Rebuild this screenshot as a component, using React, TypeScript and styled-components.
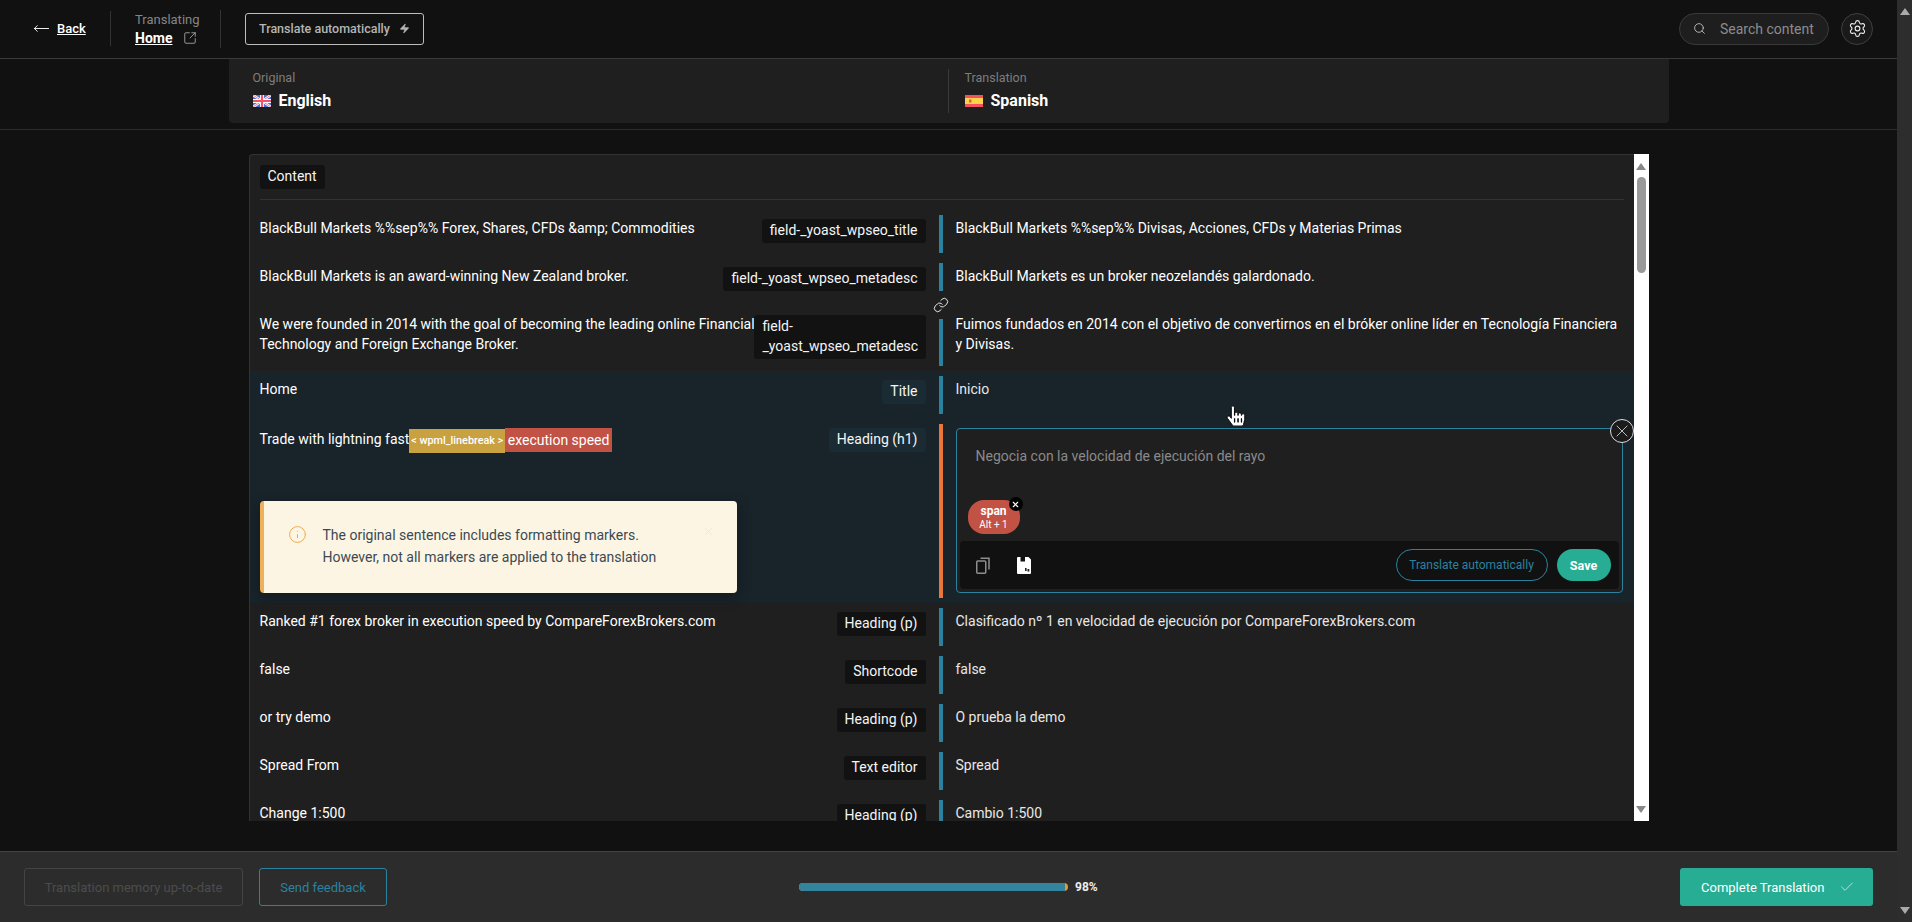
import React from "react";
import styled, { createGlobalStyle } from "styled-components";
import { Check, Link, MoveLeft, Search, Settings, SquareArrowOutUpRight, X, Zap, Info } from "lucide-react";
import { FaHandPointer } from "react-icons/fa";

const teal = "#2b829e";
const green = "#26ad94";

const Global = createGlobalStyle`
  html, body { margin: 0; padding: 0; height: 100%; background: #111; overflow: hidden; }
  body { font-family: Roboto, "Liberation Sans", sans-serif; font-size: 14px; color: #fff; }
  * { box-sizing: border-box; }
`;

const Shell = styled.div`
  display: flex;
  width: 1912px;
  height: 922px;
  position: relative;
`;

const Main = styled.div`
  flex: 1;
  min-width: 0;
  display: flex;
  flex-direction: column;
`;

const Arrow = styled.span<{ $down?: boolean; $color: string }>`
  display: block;
  width: 0;
  height: 0;
  border-left: 5px solid transparent;
  border-right: 5px solid transparent;
  ${(p) => (p.$down ? `border-top: 7px solid ${p.$color};` : `border-bottom: 7px solid ${p.$color};`)}
`;

const PageScroll = styled.div`
  width: 15px;
  background: #2d2d2d;
  display: flex;
  flex-direction: column;
  justify-content: space-between;
  align-items: center;
  padding: 8px 0;
`;

const Header = styled.header`
  height: 59px;
  flex: none;
  display: flex;
  align-items: center;
  padding: 0 24px 1px 33px;
  border-bottom: 1px solid #3a3a3a;
  background: #111;
`;

const BackLink = styled.a`
  display: flex;
  align-items: center;
  gap: 7px;
  width: 77px;
  color: #fff;
  font-size: 13px;
  font-weight: 500;
  svg { flex: none; }
  span { text-decoration: underline; }
`;

const VLine = styled.div<{ $h: number }>`
  width: 1px;
  height: ${(p) => p.$h}px;
  background: #333;
  flex: none;
`;

const Translating = styled.div`
  width: 85px;
  margin-left: 24px;
  small {
    display: block;
    font-size: 13px;
    line-height: 16px;
    color: #858585;
  }
`;

const HomeLink = styled.div`
  display: flex;
  align-items: center;
  gap: 11px;
  margin-top: 2px;
  font-size: 14px;
  line-height: 16px;
  font-weight: 700;
  color: #fff;
  span { text-decoration: underline; }
  svg { color: #bbb; }
`;

const AutoButton = styled.button`
  margin-left: 24px;
  width: 179px;
  height: 32px;
  display: flex;
  align-items: center;
  justify-content: space-between;
  padding: 0 13px;
  background: transparent;
  border: 1px solid #bdbdbd;
  border-radius: 3px;
  color: #b5b5b5;
  font: 500 12.5px Roboto, sans-serif;
`;

const Spacer = styled.div`
  flex: 1;
`;

const SearchBox = styled.div`
  width: 150px;
  height: 32px;
  display: flex;
  align-items: center;
  gap: 14px;
  padding-left: 13px;
  border: 1px solid #3a3a3a;
  border-radius: 16px;
  background: #1e1e1e;
  color: #8c8c8c;
  font-size: 14px;
  svg { color: #ccc; flex: none; }
`;

const GearButton = styled.div`
  width: 32px;
  height: 32px;
  margin-left: 12px;
  display: flex;
  align-items: center;
  justify-content: center;
  border: 1px solid #3f3f3f;
  border-radius: 50%;
  background: #1a1a1a;
  color: #eee;
`;

const SubHeader = styled.div`
  height: 71px;
  flex: none;
  display: flex;
  justify-content: center;
  border-bottom: 1px solid #2c2c2c;
  background: #111;
`;

const LangPanel = styled.div`
  width: 1440px;
  height: 64px;
  display: flex;
  background: #1f1f1f;
  border-radius: 0 0 4px 4px;
  padding: 11px 0 0 24px;
`;

const LangCol = styled.div<{ $w?: number }>`
  ${(p) => (p.$w ? `width: ${p.$w}px;` : "")}
  small {
    display: block;
    font-size: 12.5px;
    line-height: 16px;
    color: #7d7d7d;
  }
`;

const LangDivider = styled.div`
  width: 1px;
  height: 44px;
  margin-top: -1px;
  background: #3a3a3a;
  margin-right: 16px;
`;

const LangName = styled.div`
  display: flex;
  align-items: center;
  gap: 8px;
  margin-top: 5px;
  font-size: 16px;
  line-height: 20px;
  font-weight: 700;
  color: #fff;
`;

const Content = styled.div`
  flex: 1;
  min-height: 0;
  display: flex;
  justify-content: center;
  padding: 24px 0 30px;
  background: #111;
`;

const Table = styled.div`
  width: 1385px;
  display: flex;
  flex-direction: column;
  background: #1f1f1f;
  border: 1px solid #333;
  border-right: none;
  border-bottom: none;
  border-radius: 4px 0 0 0;
  overflow: hidden;
`;

const TableHead = styled.div`
  margin: 10px 10px 0;
  padding-bottom: 10px;
  border-bottom: 1px solid #333;
  flex: none;
`;

const Rows = styled.div`
  flex: 1;
  min-height: 0;
  overflow: hidden;
  padding-top: 10px;
`;

const Row = styled.div<{ $lit?: boolean }>`
  display: grid;
  grid-template-columns: 666px 1fr;
  column-gap: 13px;
  padding: 5px 0 5px 10px;
  position: relative;
  background: ${(p) => (p.$lit ? "#18232a" : "transparent")};
`;

const LeftCell = styled.div`
  display: flex;
  flex-direction: column;
  min-width: 0;
`;

const LeftLine = styled.div`
  display: flex;
  justify-content: space-between;
  align-items: flex-start;
`;

const SourceText = styled.div<{ $active?: boolean }>`
  padding-top: ${(p) => (p.$active ? 5 : 3)}px;
  line-height: 20px;
  min-width: 0;
  display: flex;
  flex-wrap: wrap;
`;

const Tag = styled.div<{ $lit?: boolean; $w?: number }>`
  flex: none;
  margin-top: 4px;
  padding: 1px 8px 3px;
  line-height: 20px;
  border-radius: 3px;
  color: #f5f5f5;
  background: ${(p) => (p.$lit ? "#1b2b34" : "#121212")};
  ${(p) => (p.$w ? `width: ${p.$w}px; margin-left: -3px; padding-left: 9px; padding-right: 7px;` : "")}
`;

const HeadTag = styled(Tag)`
  display: inline-block;
  margin-top: 0;
`;

const RightCell = styled.div<{ $active?: boolean; $soft?: boolean }>`
  min-height: 38px;
  border-left: 4px solid ${(p) => (p.$active ? "#e9773a" : teal)};
  padding: ${(p) => (p.$active ? "4px 11px 5px 13px" : "3px 11px 12px 13px")};
  line-height: 20px;
  color: ${(p) => (p.$soft ? "#e8e8e8" : "#fff")};
`;

const LinkBadge = styled.div`
  position: absolute;
  left: 679px;
  top: -15px;
  width: 24px;
  height: 28px;
  display: flex;
  align-items: center;
  justify-content: center;
  background: #1f1f1f;
  color: #e6e6e6;
`;

const LineBreakChip = styled.span`
  height: 24px;
  padding: 0 2px;
  display: inline-flex;
  align-items: center;
  background: #c9a141;
  color: #fff;
  font-size: 10.8px;
  font-weight: 500;
`;

const SpanChip = styled.span`
  height: 24px;
  margin-top: -1px;
  padding: 0 2.5px;
  display: inline-flex;
  align-items: center;
  background: #c25243;
  color: #fff;
`;

const Alert = styled.div`
  width: 477px;
  height: 92px;
  margin-top: 48px;
  display: flex;
  align-items: flex-start;
  padding: 23px 22px 0 24px;
  background: #fdf5e4;
  border-left: 4px solid #eeb058;
  border-radius: 4px;
  box-shadow: 0 4px 14px rgba(0, 0, 0, 0.3);
  color: #3b4a52;
  line-height: 22px;
`;

const AlertIcon = styled.div`
  color: #e9a94d;
  flex: none;
  width: 35px;
  margin-top: 1px;
  display: flex;
`;

const AlertText = styled.div`
  flex: 1;
`;

const AlertClose = styled.div`
  color: #f3dfc0;
  display: flex;
  margin-top: 1px;
`;

const Editor = styled.div`
  position: relative;
  height: 165px;
  border: 1px solid ${teal};
  border-radius: 4px;
  background: #1f1f1f;
  display: flex;
  flex-direction: column;
  padding: 0 3px 2px;
`;

const Placeholder = styled.div`
  padding: 17px 0 0 16px;
  color: #8a8a8a;
  line-height: 20px;
  height: 71px;
`;

const MarkerChip = styled.div`
  position: relative;
  width: 52px;
  height: 34px;
  margin-left: 8px;
  display: flex;
  flex-direction: column;
  align-items: center;
  justify-content: center;
  background: #c25243;
  border-radius: 16px;
  color: #fff;
  b { font-size: 12px; line-height: 14px; font-weight: 700; }
  small { font-size: 10px; line-height: 13px; }
`;

const MarkerRemove = styled.div`
  position: absolute;
  right: -3px;
  top: -3px;
  width: 14px;
  height: 14px;
  display: flex;
  align-items: center;
  justify-content: center;
  background: #000;
  border-radius: 50%;
  color: #fff;
`;

const EditorBar = styled.div`
  height: 48px;
  margin-top: 7px;
  display: flex;
  align-items: center;
  padding: 0 8px 0 16px;
  background: #111;
  border-radius: 4px;
`;

const CopyIcon = styled.div`
  display: flex;
  width: 41px;
`;

const PillOutline = styled.button`
  width: 152px;
  height: 32px;
  border: 1px solid ${teal};
  border-radius: 16px;
  background: transparent;
  color: ${teal};
  font: 400 12px Roboto, sans-serif;
  padding: 0;
`;

const PillSave = styled.button`
  width: 54px;
  height: 32px;
  margin-left: 9px;
  border: none;
  border-radius: 16px;
  background: ${green};
  color: #fff;
  font: 700 12.5px Roboto, sans-serif;
  padding: 0;
`;

const CloseRound = styled.div`
  position: absolute;
  right: -12px;
  top: -10px;
  width: 24px;
  height: 24px;
  display: flex;
  align-items: center;
  justify-content: center;
  border: 1px solid #ddd;
  border-radius: 50%;
  background: #1b1b1b;
  color: #ddd;
`;

const TableScroll = styled.div`
  width: 15px;
  background: #fff;
  display: flex;
  flex-direction: column;
  align-items: center;
  padding: 9px 0 8px;
`;

const Thumb = styled.div`
  width: 9px;
  height: 96px;
  margin-top: 7px;
  border-radius: 5px;
  background: #999;
`;

const Footer = styled.footer`
  height: 71px;
  flex: none;
  position: relative;
  display: flex;
  align-items: center;
  padding: 0 24px 0 24px;
  background: #2c2c2c;
  border-top: 1px solid #444;
`;

const GhostButton = styled.button<{ $w: number; $on?: boolean }>`
  width: ${(p) => p.$w}px;
  height: 38px;
  margin-right: 16px;
  background: transparent;
  border: 1px solid ${(p) => (p.$on ? teal : "#444")};
  border-radius: 3px;
  color: ${(p) => (p.$on ? teal : "#4c4c4c")};
  font: 400 13px Roboto, sans-serif;
  padding: 0;
`;

const Progress = styled.div`
  position: absolute;
  left: 799px;
  top: 0;
  height: 70px;
  display: flex;
  align-items: center;
  gap: 7px;
  font-size: 12px;
  font-weight: 700;
  color: #eee;
`;

const Track = styled.div`
  width: 269px;
  height: 8px;
  border-radius: 4px;
  background: #e8982b;
  overflow: hidden;
`;

const Fill = styled.div`
  height: 100%;
  background: #33859e;
`;

const CompleteButton = styled.button`
  width: 193px;
  height: 38px;
  display: flex;
  align-items: center;
  justify-content: space-between;
  padding: 0 18px 0 21px;
  border: none;
  border-radius: 3px;
  background: ${green};
  color: #fff;
  font: 400 13px Roboto, sans-serif;
  svg { color: #e4f7f3; }
`;

const Cursor = styled.div`
  position: absolute;
  left: 1226px;
  top: 406px;
  display: flex;
  color: #fff;
`;

const UkFlag = () => (
  <svg width="18" height="12" viewBox="0 0 18 12">
    <rect width="18" height="12" fill="#4a6fd8" />
    <path d="M0 0L18 12M18 0L0 12" stroke="#fff" strokeWidth="2.4" />
    <path d="M0 0L18 12M18 0L0 12" stroke="#f0556a" strokeWidth="0.8" />
    <path d="M9 0V12M0 6H18" stroke="#fff" strokeWidth="4" />
    <path d="M9 0V12M0 6H18" stroke="#f0556a" strokeWidth="2.2" />
  </svg>
);

const EsFlag = () => (
  <svg width="18" height="12" viewBox="0 0 18 12">
    <rect width="18" height="12" fill="#f4515d" />
    <rect y="3" width="18" height="6" fill="#fbd34a" />
    <rect x="4" y="4.5" width="2.5" height="3" fill="#d9663a" />
  </svg>
);

const MemoryIcon = () => (
  <svg width="14" height="17" viewBox="0 0 14 17">
    <path d="M1 0H3.5V4.5H8V0H11.5L14 2.5V16a1 1 0 0 1-1 1H1a1 1 0 0 1-1-1V1a1 1 0 0 1 1-1Z" fill="#fff" />
    <rect x="8" y="11" width="1.6" height="3" fill="#222" />
    <rect x="10.5" y="12" width="1.8" height="2.6" fill="#222" />
  </svg>
);

const CopyGlyph = () => (
  <svg width="14" height="17" viewBox="0 0 14 17" fill="none" stroke="#8e8e8e" strokeWidth="1.5">
    <rect x="0.75" y="4" width="9" height="12.25" rx="1" />
    <path d="M4.5 1.2H13V12.5" />
  </svg>
);

type RowData = { source: string; tag: string; target: string; lit?: boolean; tagWidth?: number; linked?: boolean; soft?: boolean };

const before: RowData[] = [
  {
    source: "BlackBull Markets %%sep%% Forex, Shares, CFDs &amp; Commodities",
    tag: "field-_yoast_wpseo_title",
    target: "BlackBull Markets %%sep%% Divisas, Acciones, CFDs y Materias Primas",
  },
  {
    source: "BlackBull Markets is an award-winning New Zealand broker.",
    tag: "field-_yoast_wpseo_metadesc",
    target: "BlackBull Markets es un broker neozelandés galardonado.",
  },
  {
    source: "We were founded in 2014 with the goal of becoming the leading online Financial Technology and Foreign Exchange Broker.",
    tag: "field-_yoast_wpseo_metadesc",
    target: "Fuimos fundados en 2014 con el objetivo de convertirnos en el bróker online líder en Tecnología Financiera y Divisas.",
    tagWidth: 172,
    linked: true,
  },
  { source: "Home", tag: "Title", target: "Inicio", lit: true, soft: true },
];

const after: RowData[] = [
  {
    source: "Ranked #1 forex broker in execution speed by CompareForexBrokers.com",
    tag: "Heading (p)",
    target: "Clasificado nº 1 en velocidad de ejecución por CompareForexBrokers.com",
    soft: true,
  },
  { source: "false", tag: "Shortcode", target: "false", soft: true },
  { source: "or try demo", tag: "Heading (p)", target: "O prueba la demo", soft: true },
  { source: "Spread From", tag: "Text editor", target: "Spread", soft: true },
  { source: "Change 1:500", tag: "Heading (p)", target: "Cambio 1:500", soft: true },
];

const TextRow = ({ row }: { row: RowData }) => (
  <Row $lit={row.lit}>
    {row.linked && (
      <LinkBadge>
        <Link size={16} strokeWidth={1.5} />
      </LinkBadge>
    )}
    <LeftCell>
      <LeftLine>
        <SourceText>{row.source}</SourceText>
        <Tag $lit={row.lit} $w={row.tagWidth}>
          {row.tag}
        </Tag>
      </LeftLine>
    </LeftCell>
    <RightCell $soft={row.soft}>{row.target}</RightCell>
  </Row>
);

export default function App() {
  return (
    <Shell>
      <Global />
      <Main>
        <Header>
          <BackLink>
            <MoveLeft size={17} strokeWidth={1.3} />
            <span>Back</span>
          </BackLink>
          <VLine $h={35} />
          <Translating>
            <small>Translating</small>
            <HomeLink>
              <span>Home</span>
              <SquareArrowOutUpRight size={14} strokeWidth={1.3} />
            </HomeLink>
          </Translating>
          <VLine $h={38} />
          <AutoButton>
            Translate automatically
            <Zap size={11} fill="#b5b5b5" strokeWidth={1} />
          </AutoButton>
          <Spacer />
          <SearchBox>
            <Search size={13} strokeWidth={1.5} />
            Search content
          </SearchBox>
          <GearButton>
            <Settings size={19} strokeWidth={1.4} />
          </GearButton>
        </Header>
        <SubHeader>
          <LangPanel>
            <LangCol $w={695}>
              <small>Original</small>
              <LangName>
                <UkFlag />
                English
              </LangName>
            </LangCol>
            <LangDivider />
            <LangCol>
              <small>Translation</small>
              <LangName>
                <EsFlag />
                Spanish
              </LangName>
            </LangCol>
          </LangPanel>
        </SubHeader>
        <Content>
          <Table>
            <TableHead>
              <HeadTag>Content</HeadTag>
            </TableHead>
            <Rows>
              {before.map((row) => (
                <TextRow key={row.source} row={row} />
              ))}
              <Row $lit>
                <LeftCell>
                  <LeftLine>
                    <SourceText $active>
                      Trade with lightning fast
                      <LineBreakChip>{"< wpml_linebreak >"}</LineBreakChip>
                      <SpanChip>execution speed</SpanChip>
                    </SourceText>
                    <Tag $lit>Heading (h1)</Tag>
                  </LeftLine>
                  <Alert>
                    <AlertIcon>
                      <Info size={19} strokeWidth={1.2} />
                    </AlertIcon>
                    <AlertText>
                      The original sentence includes formatting markers.
                      <br />
                      However, not all markers are applied to the translation
                    </AlertText>
                    <AlertClose>
                      <X size={13} strokeWidth={1.2} />
                    </AlertClose>
                  </Alert>
                </LeftCell>
                <RightCell $active>
                  <Editor>
                    <Placeholder>Negocia con la velocidad de ejecución del rayo</Placeholder>
                    <MarkerChip>
                      <b>span</b>
                      <small>Alt + 1</small>
                      <MarkerRemove>
                        <X size={9} strokeWidth={3} />
                      </MarkerRemove>
                    </MarkerChip>
                    <EditorBar>
                      <CopyIcon>
                        <CopyGlyph />
                      </CopyIcon>
                      <MemoryIcon />
                      <Spacer />
                      <PillOutline>Translate automatically</PillOutline>
                      <PillSave>Save</PillSave>
                    </EditorBar>
                    <CloseRound>
                      <X size={20} strokeWidth={1} />
                    </CloseRound>
                  </Editor>
                </RightCell>
              </Row>
              {after.map((row) => (
                <TextRow key={row.source} row={row} />
              ))}
            </Rows>
          </Table>
          <TableScroll>
            <Arrow $color="#888" />
            <Thumb />
            <Spacer />
            <Arrow $down $color="#888" />
          </TableScroll>
        </Content>
        <Footer>
          <GhostButton $w={219}>Translation memory up-to-date</GhostButton>
          <GhostButton $w={128} $on>
            Send feedback
          </GhostButton>
          <Progress>
            <Track>
              <Fill style={{ width: "98.8%" }} />
            </Track>
            98%
          </Progress>
          <Spacer />
          <CompleteButton>
            Complete Translation
            <Check size={16} strokeWidth={1.1} />
          </CompleteButton>
        </Footer>
      </Main>
      <PageScroll>
        <Arrow $color="#aaa" />
        <Arrow $down $color="#aaa" />
      </PageScroll>
      <Cursor>
        <FaHandPointer size={20} stroke="#000" strokeWidth={24} />
      </Cursor>
    </Shell>
  );
}
